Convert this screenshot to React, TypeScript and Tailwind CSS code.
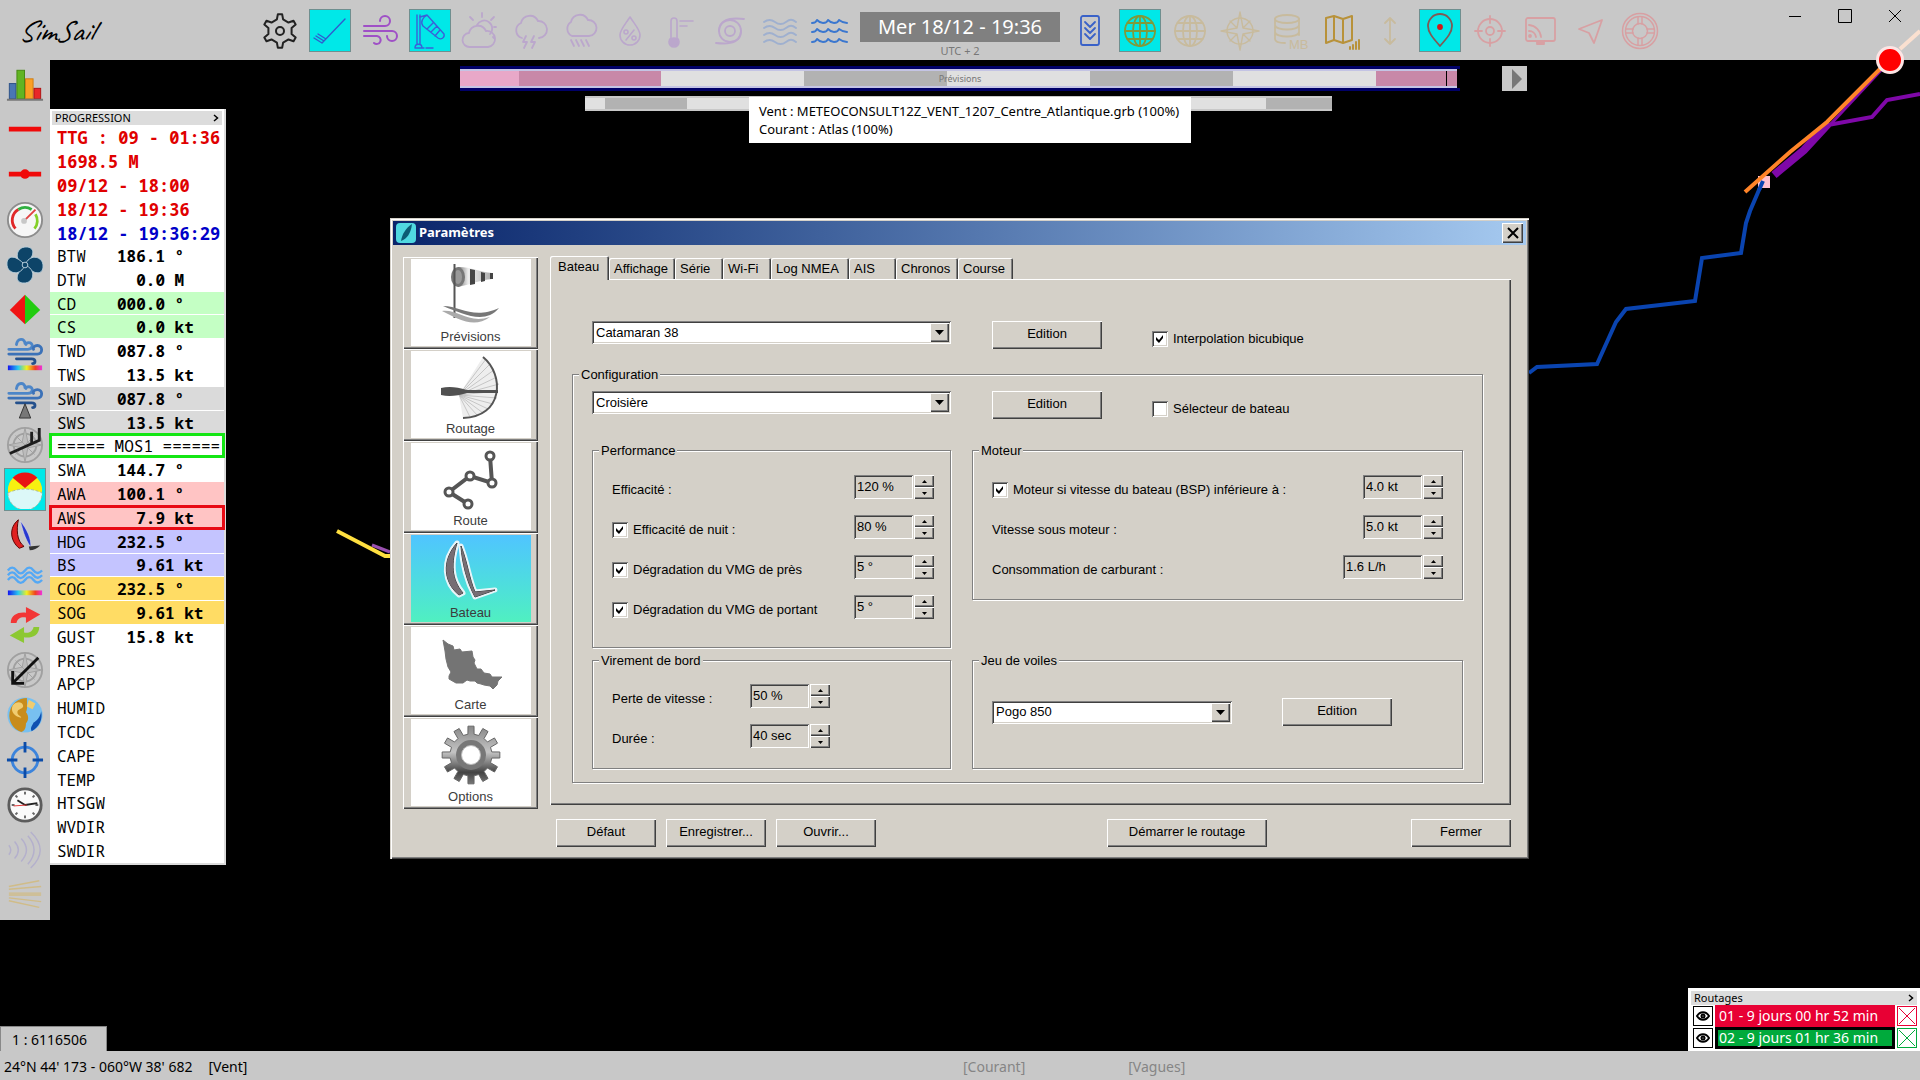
import { useState } from 'react'
import type { ReactNode } from 'react'
import clsx from 'clsx'

const RAISED = 'bg-[#d4d0c8] shadow-[inset_1px_1px_0_#fff,inset_-1px_-1px_0_#404040,inset_-2px_-2px_0_#808080]'
const SUNKEN = 'shadow-[inset_1px_1px_0_#808080,inset_-1px_-1px_0_#fff,inset_2px_2px_0_#404040,inset_-2px_-2px_0_#d4d0c8]'

/** Closed outline of a cog, centred on (c, c). */
function cog(c: number, teeth: number, outer: number, inner: number, half = 0.22, root = 0.36) {
  const pts: string[] = []
  for (let i = 0; i < teeth; i++) {
    const step = (Math.PI * 2) / teeth
    const a = i * step - Math.PI / 2
    const corners: [number, number][] = [
      [-root, inner],
      [-half, outer],
      [half, outer],
      [root, inner],
    ]
    corners.forEach(([k, r]) => {
      const t = a + k * step
      pts.push(`${(c + r * Math.cos(t)).toFixed(2)} ${(c + r * Math.sin(t)).toFixed(2)}`)
    })
  }
  return `M${pts.join('L')}Z`
}

/* ---------- top toolbar ---------- */

type Tool = { label: string; color: string; active?: boolean; width?: number; art: ReactNode }

const PURPLE = '#9f50c6'
const PURPLE_OFF = '#bba7cc'
const GOLD_OFF = '#c8bb9d'
const RED_OFF = '#d8a0a3'

const globe = (
  <>
    <circle cx="20" cy="20" r="15" />
    <ellipse cx="20" cy="20" rx="7" ry="15" />
    <path d="M20 5v30M5 20h30M7.500 12h25M7.500 28h25" />
  </>
)

const leftTools: Tool[] = [
  {
    label: 'Paramètres',
    color: '#222',
    width: 2,
    art: (
      <>
        <path d={cog(20, 6, 17, 12, 0.12, 0.25)} />
        <circle cx="20" cy="20" r="4" />
      </>
    ),
  },
  {
    label: 'Barbules',
    color: '#2f5ccf',
    active: true,
    art: <path d="M35 8 12 32M12 32 4 27M14 30l-8-5M16 28l-8-5" />,
  },
  {
    label: 'Vent',
    color: PURPLE,
    width: 2,
    art: <path d="M4 15h21a5 5 0 1 0-5-5M4 20h28a5 5 0 1 1-5 5M4 25h13a4 4 0 1 1-3 7" />,
  },
  {
    label: 'Manche à air',
    color: '#3a60d8',
    active: true,
    art: (
      <>
        <path d="M7 4v29M10 4v29M5 37c0-5 7-5 7 0zM5 37h9M16 37h7" />
        <path d="M10 6 17 4l17 19c1 4-3 6-6 4L13 15M13 15c-3-4 0-9 4-11M17 18l6-6M21 21l6-6M25 25l5-6" />
      </>
    ),
  },
  {
    label: 'Nuages',
    color: PURPLE_OFF,
    width: 1.8,
    art: (
      <>
        <path d="M10 36a7 7 0 0 1-1-14 9 9 0 0 1 17-2 7 7 0 0 1 2 16z" />
        <path d="M17 14a8 8 0 1 1 13 9M22 2v4M10 6l3 3M34 6l-3 3M36 16h-2M33 26l1 1" />
      </>
    ),
  },
  {
    label: 'Orages',
    color: PURPLE_OFF,
    width: 1.8,
    art: <path d="M12 27a8 8 0 0 1-1-15 9 9 0 0 1 17-2 8 8 0 0 1 1 17M16 25l-3 6h4l-3 6M24 25l-3 6h4l-3 6" />,
  },
  {
    label: 'Pluie',
    color: PURPLE_OFF,
    width: 1.8,
    art: <path d="M12 25a8 8 0 0 1-1-14 9 9 0 0 1 17-2 8 8 0 0 1 1 16zM11 29l3 6M16 29l3 6M21 29l3 6M26 29l3 6" />,
  },
  {
    label: 'Humidité',
    color: PURPLE_OFF,
    width: 1.6,
    art: (
      <>
        <path d="M20 6c6 9 10 13 10 18a10 10 0 0 1-20 0c0-5 4-9 10-18zM24 19l-8 10" />
        <circle cx="16" cy="21" r="2" />
        <circle cx="24" cy="27" r="2" />
      </>
    ),
  },
  {
    label: 'Température',
    color: PURPLE_OFF,
    width: 1.6,
    art: (
      <>
        <path d="M11 27V10a3 3 0 0 1 6 0v17a5 5 0 1 1-6 0zM20 10h13M20 15h7" />
        <circle cx="14" cy="31" r="4" fill="currentColor" />
      </>
    ),
  },
  {
    label: 'Cyclone',
    color: PURPLE_OFF,
    width: 1.8,
    art: (
      <>
        <circle cx="20" cy="20" r="5" />
        <circle cx="20" cy="20" r="11" />
        <path d="M9 20C9 10 17 6 34 8M31 20c0 10-8 14-25 12" />
      </>
    ),
  },
  {
    label: 'Houle',
    color: '#9fb0cf',
    width: 2,
    art: (
      <path d="M4 11c4-3 7-3 11 0s7 3 11 0 6-3 10 0M4 17c4-3 7-3 11 0s7 3 11 0 6-3 10 0M4 24c4-3 7-3 11 0s7 3 11 0 6-3 10 0M4 31c4-3 7-3 11 0s7 3 11 0 6-3 10 0" />
    ),
  },
  {
    label: 'Courant',
    color: '#3b77cf',
    width: 2,
    art: (
      <path d="M2 12q4 0 5-3 3 3 6 3 4 0 5-3 3 3 6 3 4 0 5-3 4 3 8 3M2 21q4 0 5-3 3 3 6 3 4 0 5-3 3 3 6 3 4 0 5-3 4 3 8 3M2 31q4 0 5-3 3 3 6 3 4 0 5-3 3 3 6 3 4 0 5-3 4 3 8 3" />
    ),
  },
]

const rightTools: Tool[] = [
  {
    label: 'Téléchargement',
    color: '#3a62c8',
    width: 1.8,
    art: (
      <>
        <rect x="11" y="5" width="18" height="29" rx="2" />
        <path d="m15 11 5 5 5-5M15 17l5 5 5-5M15 23l5 5 5-5" />
      </>
    ),
  },
  { label: 'Carte du monde', color: '#7f9a3c', active: true, width: 1.8, art: globe },
  { label: 'Globe', color: GOLD_OFF, width: 1.8, art: globe },
  {
    label: 'Rose des vents',
    color: GOLD_OFF,
    art: (
      <>
        <circle cx="20" cy="20" r="13" />
        <path d="M20 1l3 16 16 3-16 3-3 16-3-16-16-3 16-3zM10 10l7 7M30 10l-7 7M10 30l7-7M30 30l-7-7" />
      </>
    ),
  },
  {
    label: 'Mémoire',
    color: GOLD_OFF,
    width: 1.8,
    art: (
      <>
        <ellipse cx="17" cy="8" rx="12" ry="4" />
        <path d="M5 8v20c0 3 5 4 10 4M29 8v16M5 14c0 6 24 6 24 0M5 21c0 6 24 6 24 0" />
        <text x="19" y="38" fontSize="13" fill="currentColor" stroke="none" className="font-['Liberation_Sans',sans-serif]">
          MB
        </text>
      </>
    ),
  },
  {
    label: 'Cartes',
    color: '#b8923a',
    width: 2,
    art: <path d="M6 7l8-2 9 3 9-3v24l-9 3-9-3-8 3zM14 5v24M23 8v24M30 38v-2M33 38v-4M36 38v-7M39 38v-9" />,
  },
  { label: 'Échelle verticale', color: GOLD_OFF, width: 1.8, art: <path d="M20 7v26M15 12l5-5 5 5M15 28l5 5 5-5" /> },
  {
    label: 'Position',
    color: '#7f5a55',
    active: true,
    width: 1.8,
    art: (
      <>
        <path d="M20 35C12 26 8 21 8 15a12 12 0 0 1 24 0c0 6-4 11-12 20z" />
        <circle cx="20" cy="16" r="2" fill="#d01818" stroke="#d01818" />
      </>
    ),
  },
  {
    label: 'Cible',
    color: RED_OFF,
    width: 1.8,
    art: (
      <>
        <circle cx="20" cy="20" r="12" />
        <circle cx="20" cy="20" r="4" />
        <path d="M20 5v7M20 28v7M5 20h7M28 20h7" />
      </>
    ),
  },
  {
    label: 'Diffusion',
    color: RED_OFF,
    width: 1.8,
    art: (
      <>
        <rect x="6" y="7" width="29" height="23" rx="2" />
        <path d="M9 14a13 13 0 0 1 12 12M9 20a7 7 0 0 1 7 6" />
        <path d="M17 30h7v3h-7z" fill="currentColor" />
        <circle cx="10" cy="25" r="1" fill="currentColor" />
      </>
    ),
  },
  { label: 'Navigation', color: RED_OFF, width: 1.8, art: <path d="M32 9 24 32l-5-10-10-4z" /> },
  {
    label: 'Assistance',
    color: RED_OFF,
    width: 1.5,
    art: (
      <>
        <circle cx="20" cy="20" r="17.500" />
        <circle cx="20" cy="20" r="14.500" />
        <circle cx="20" cy="20" r="7.500" />
        <path d="M18 6v7M22 6v7M18 27v7M22 27v7M6 18h7M6 22h7M27 18h7M27 22h7" />
      </>
    ),
  },
]

function ToolButton({ tool }: { tool: Tool }) {
  return (
    <button
      type="button"
      aria-label={tool.label}
      className={clsx('flex h-[43px] w-[42px] items-center justify-center', tool.active && 'border border-[#6f8f8f] bg-[#00e8e8]')}
    >
      <svg
        viewBox="0 0 40 40"
        className="h-10 w-10 shrink-0"
        fill="none"
        stroke="currentColor"
        strokeWidth={tool.width ?? 1.4}
        strokeLinecap="round"
        strokeLinejoin="round"
        color={tool.color}
      >
        {tool.art}
      </svg>
    </button>
  )
}

function Header() {
  return (
    <header className="relative flex h-[60px] shrink-0 justify-center bg-[#c8c8c8]">
      <span className="absolute left-[18px] top-[11px] font-['Caveat','Segoe_Script','Lato',cursive] text-[30px] font-light italic leading-10 text-black">
        SimSail
      </span>
      <div className="flex gap-2 pt-[9px]">
        {leftTools.map((t) => (
          <ToolButton key={t.label} tool={t} />
        ))}
      </div>
      <div className="mx-2 flex w-[202px] flex-col items-center pt-3">
        <div className="flex h-[30px] w-[200px] items-center justify-center bg-[#808080] text-[20px] text-white">
          Mer 18/12 - 19:36
        </div>
        <span className="text-[11px] leading-[18px] text-[#777]">UTC + 2</span>
      </div>
      <div className="flex gap-2 pt-[9px]">
        {rightTools.map((t) => (
          <ToolButton key={t.label} tool={t} />
        ))}
      </div>
      <div className="absolute right-0 top-0 flex">
        <button type="button" aria-label="Réduire" className="h-8 w-[50px] pl-[17px]">
          <svg viewBox="0 0 16 16" className="h-4 w-4" stroke="#000" fill="none"><path d="M2 8.500h12" /></svg>
        </button>
        <button type="button" aria-label="Agrandir" className="h-8 w-[50px] pl-[17px]">
          <svg viewBox="0 0 16 16" className="h-4 w-4" stroke="#000" fill="none"><path d="M1.500 1.500h13v13h-13z" /></svg>
        </button>
        <button type="button" aria-label="Quitter" className="h-8 w-[50px] pl-[17px]">
          <svg viewBox="0 0 16 16" className="h-4 w-4" stroke="#000" fill="none"><path d="M2 2l12 12M14 2 2 14" /></svg>
        </button>
      </div>
    </header>
  )
}

/* ---------- left sidebar ---------- */

const rainbow = <rect x="2" y="31" width="36" height="5" fill="url(#rainbow)" />

const gusts = (
  <g fill="none" strokeWidth="3" strokeLinecap="round">
    <path d="M3 14h20c6 0 6-7 1-7-2 0-3 1-3 2M11 9c1-7 9-7 9-1" stroke="#4d86c8" />
    <path d="M3 19h30c6 0 6-9 0-9-3 0-5 2-4 4" stroke="#3c72b8" />
    <path d="M11 24h16c5 0 4 5 1 5" stroke="#24508c" />
  </g>
)

const compassBack = (
  <g fill="none" stroke="#a0a0a0">
    <circle cx="20" cy="20" r="18" strokeWidth="2" />
    <circle cx="20" cy="20" r="12" strokeWidth="2" />
    <path d="M20 2l3 15 15 3-15 3-3 15-3-15-15-3 15-3z" strokeWidth="1" fill="#bcbcbc" />
    <path d="M10 10l20 20M30 10 10 30" strokeWidth="1" />
  </g>
)

type SideTool = { label: string; active?: boolean; art: ReactNode }

const sideTools: SideTool[] = [
  {
    label: 'Graphiques',
    art: (
      <>
        <rect x="3.500" y="18.500" width="7" height="16" fill="#4a76b4" stroke="#2a4f86" />
        <rect x="11.500" y="4.500" width="8" height="30" fill="#62b422" stroke="#448812" />
        <rect x="20.500" y="13.500" width="8" height="21" fill="#fba024" stroke="#d07c10" />
        <rect x="29.500" y="23.500" width="7" height="11" fill="#e82828" stroke="#b01010" />
        <path d="M1 35.500h38" stroke="#777" strokeWidth="2" />
      </>
    ),
  },
  { label: 'Segment', art: <path d="M3 19h34" stroke="#f00a0a" strokeWidth="5" /> },
  {
    label: 'Point de segment',
    art: (
      <>
        <path d="M3 19h34" stroke="#f00a0a" strokeWidth="5" />
        <circle cx="20" cy="19" r="5" fill="#f00a0a" />
      </>
    ),
  },
  {
    label: 'Vitesse',
    art: (
      <>
        <circle cx="20" cy="20" r="18" fill="#f6f6f6" stroke="#8c8c8c" strokeWidth="2" />
        <g fill="none" strokeWidth="3">
          <path d="M10 29A13 13 0 0 1 13 9" stroke="#e02828" />
          <path d="M13 9a13 13 0 0 1 14 0" stroke="#30b040" />
          <path d="M31 14a13 13 0 0 1-1 15" stroke="#84d028" />
        </g>
        <path d="M19 21 31 9" stroke="#e04040" strokeWidth="2" />
        <circle cx="19" cy="21" r="3" fill="#c8c8c8" />
      </>
    ),
  },
  {
    label: 'Moteur',
    art: (
      <g fill="#0d4468" stroke="#b8d0dc" strokeWidth="1">
        <path d="M18 19C8 14 11 1 21 1c9 0 10 8 1 17z" />
        <path d="M21 18c5-10 18-7 18 3 0 9-8 10-17 1z" />
        <path d="M22 21c10 5 7 18-3 18-9 0-10-8-1-17z" />
        <path d="M19 22C14 32 1 29 1 19c0-9 8-10 17-1z" />
        <circle cx="20" cy="20" r="3" />
      </g>
    ),
  },
  {
    label: 'Babord tribord',
    art: (
      <>
        <path d="M20 4v31L4 20z" fill="#f01414" />
        <path d="M20 4v31l16-15z" fill="#22cc10" />
      </>
    ),
  },
  { label: 'Vent coloré', art: <>{gusts}{rainbow}</> },
  {
    label: 'Vent balise',
    art: (
      <>
        <g transform="translate(0 -1)">{gusts}</g>
        <path d="M20 24l6 15H14z" fill="#777" stroke="#333" />
      </>
    ),
  },
  {
    label: 'Compas vent',
    art: (
      <>
        {compassBack}
        <path d="M4 29 35 15V2M27 18V6" fill="none" stroke="#1c1c1c" strokeWidth="3" />
      </>
    ),
  },
  {
    label: 'Polaire',
    active: true,
    art: (
      <>
        <circle cx="20" cy="20" r="18" fill="#f7f010" />
        <path d="M20 18 7 7a18 18 0 0 1 26 0z" fill="#e81414" />
        <path d="M2 23q18-8 36 0a18 18 0 0 1-36 0z" fill="#dcf8f8" stroke="#a8b8a0" strokeDasharray="3 2" />
      </>
    ),
  },
  {
    label: 'Voiles',
    art: (
      <>
        <path d="M13 4C3 12 4 26 14 34l5-2C11 26 11 14 13 4z" fill="#e02020" stroke="#500" />
        <path d="M15 5c3 10 4 17 11 28 1-9-4-19-11-28z" fill="#2838d0" stroke="#eee" strokeWidth="0.500" />
        <path d="M24 32l12-1c-3 3-7 5-11 5z" fill="#333" />
      </>
    ),
  },
  {
    label: 'Courant coloré',
    art: (
      <>
        <path
          d="M2 10c3-4 6-4 9 0s6 4 9 0 6-4 9 0 6 3 9 0M2 15c3-4 6-4 9 0s6 4 9 0 6-4 9 0 6 3 9 0M2 20c3-4 6-4 9 0s6 4 9 0 6-4 9 0 6 3 9 0"
          fill="none"
          stroke="#54a8f4"
          strokeWidth="2.500"
        />
        {rainbow}
      </>
    ),
  },
  {
    label: 'Inverser',
    art: (
      <>
        <path d="M5 18c0-9 8-12 16-11V1l15 8-15 9v-6c-5-1-9 1-10 6z" fill="#f23636" />
        <path d="M35 22c0 9-8 12-16 11v6L4 31l15-9v6c5 1 9-1 10-6z" fill="#8cc832" />
      </>
    ),
  },
  {
    label: 'Compas courant',
    art: (
      <>
        {compassBack}
        <path d="M34 7 8 33M7 21v13h12" fill="none" stroke="#111" strokeWidth="3" />
      </>
    ),
  },
  {
    label: 'Globe',
    art: (
      <>
        <circle cx="20" cy="20" r="18.500" fill="#78c0f0" />
        <path d="M22 2a18.500 18.500 0 0 0-6 36c4-1 5-5 5-9 4-5 2-10 0-12 2-4 1-8 1-15z" fill="#c88c1c" />
        <path d="M7 10c4-5 10-4 11 0s-6 3-6 7 4 3 4 6c-6-1-12-6-9-13zM24 4l7 4-3 6-6-3z" fill="#f0cc70" />
        <path d="M37 16c2 8-2 17-10 21-2-4 1-6 2-9 3-2 7-5 8-12z" fill="#1050b0" />
      </>
    ),
  },
  {
    label: 'Centrer',
    art: (
      <>
        <circle cx="20" cy="20" r="13.500" fill="none" stroke="#3c84dc" strokeWidth="3" />
        <path d="M20 1v11M20 28v11M1 20h11M28 20h11" stroke="#0c4ca8" strokeWidth="3" />
      </>
    ),
  },
  {
    label: 'Heure',
    art: (
      <>
        <circle cx="20" cy="20" r="17" fill="#fafafa" stroke="#5c5c5c" strokeWidth="3" />
        <path d="M20 6v3M20 31v3M6 20h3M31 20h3M10 10l2 2M30 10l-2 2M10 30l2-2M30 30l-2-2" stroke="#666" strokeWidth="2" />
        <path d="M20 20l-8-5M20 20l13-2" stroke="#222" strokeWidth="2" />
        <path d="M8 21l14-1" stroke="#e03030" />
      </>
    ),
  },
  {
    label: 'Signal',
    art: (
      <path
        d="M3 15q4 5 0 10M9 11q8 9 0 18M16 8q11 12 0 24M23 5q13 15 0 30M26 1q20 19 0 38"
        fill="none"
        stroke="#b4b0cc"
        strokeWidth="1.500"
      />
    ),
  },
  {
    label: 'Isobares',
    art: <path d="M3 11 35 5M3 14l34-3M3 18h34M3 20h34M3 23l34 4M3 26l32 7" fill="none" stroke="#d0bc88" strokeWidth="1.500" />,
  },
]

function Sidebar() {
  return (
    <nav aria-label="Outils" className="flex w-[50px] shrink-0 flex-col items-center self-start bg-[#c8c8c8] pb-[3px] pt-0.5">
      <svg className="absolute h-0 w-0" aria-hidden="true">
        <defs>
          <linearGradient id="rainbow">
            <stop offset="0" stopColor="#1414f0" />
            <stop offset="0.3" stopColor="#28c8f0" />
            <stop offset="0.55" stopColor="#f0f020" />
            <stop offset="0.8" stopColor="#f04020" />
            <stop offset="1" stopColor="#f030e0" />
          </linearGradient>
        </defs>
      </svg>
      {sideTools.map((t) => (
        <div key={t.label} className="flex h-[45px] items-center">
          <button
            type="button"
            aria-label={t.label}
            className={clsx('flex h-[43px] w-[42px] items-center justify-center', t.active && 'border border-[#6f8f8f] bg-[#00e8e8]')}
          >
            <svg viewBox="0 0 40 40" className="h-[38px] w-[38px]">
              {t.art}
            </svg>
          </button>
        </div>
      ))}
    </nav>
  )
}

/* ---------- progression panel ---------- */

type Reading = { name: string; value?: string; tone?: string }

const dates = [
  { text: 'TTG : 09 - 01:36', tone: 'text-[#e00000]' },
  { text: '1698.5 M', tone: 'text-[#e00000]' },
  { text: '09/12 - 18:00', tone: 'text-[#e00000]' },
  { text: '18/12 - 19:36', tone: 'text-[#e00000]' },
  { text: '18/12 - 19:36:29', tone: 'text-[#0000c8]' },
]

const readings: Reading[] = [
  { name: 'BTW', value: '186.1 º' },
  { name: 'DTW', value: '  0.0 M' },
  { name: 'CD', value: '000.0 º', tone: 'bg-[#c4ffc4]' },
  { name: 'CS', value: '  0.0 kt', tone: 'bg-[#c4ffc4]' },
  { name: 'TWD', value: '087.8 º' },
  { name: 'TWS', value: ' 13.5 kt' },
  { name: 'SWD', value: '087.8 º', tone: 'bg-[#dadada]' },
  { name: 'SWS', value: ' 13.5 kt', tone: 'bg-[#dadada]' },
  { name: '===== MOS1 ======', tone: 'outline-[3px] -outline-offset-2 outline-[#14e614]' },
  { name: 'SWA', value: '144.7 º' },
  { name: 'AWA', value: '100.1 º', tone: 'bg-[#ffc4c4]' },
  { name: 'AWS', value: '  7.9 kt', tone: 'bg-[#ffc4c4] outline-[3px] -outline-offset-2 outline-[#e80a14]' },
  { name: 'HDG', value: '232.5 º', tone: 'bg-[#c4c4ff]' },
  { name: 'BS', value: '  9.61 kt', tone: 'bg-[#c4c4ff]' },
  { name: 'COG', value: '232.5 º', tone: 'bg-[#ffdc64]' },
  { name: 'SOG', value: '  9.61 kt', tone: 'bg-[#ffdc64]' },
  { name: 'GUST', value: ' 15.8 kt' },
  ...['PRES', 'APCP', 'HUMID', 'TCDC', 'CAPE', 'TEMP', 'HTSGW', 'WVDIR', 'SWDIR'].map((name) => ({ name })),
]

function PanelTitle({ children }: { children: string }) {
  return (
    <div className="flex h-[14px] items-center justify-between bg-[#dcdcdc] px-[3px] text-[11px] text-black">
      <span>{children}</span>
      <button type="button" aria-label={`Replier ${children}`} className="h-3">
        <svg viewBox="0 0 6 8" className="h-2 w-1.5" fill="none" stroke="#000" strokeWidth="1.500"><path d="M1 1l3.500 3L1 7" /></svg>
      </button>
    </div>
  )
}

function Progression() {
  return (
    <section className="absolute left-[50px] top-[49px] w-[176px] border-b-2 border-r-2 border-[#dcdcdc] bg-white pt-0.5">
      <div className="px-0.5">
        <PanelTitle>PROGRESSION</PanelTitle>
      </div>
      <div className="grid h-[738px] auto-rows-fr whitespace-pre font-['Noto_Sans_Mono','DejaVu_Sans_Mono',monospace] text-[16px] leading-none">
        {dates.map((d) => (
          <div key={d.text} className={clsx('flex items-center pl-[7px] pt-0.5 text-[17px] font-bold', d.tone)}>
            {d.text}
          </div>
        ))}
        {readings.map((r) => (
          <div key={r.name} className="flex pb-px">
            <div className={clsx('flex w-full items-center pl-[7px] pt-px', r.tone)}>
              <span className={r.value ? 'w-[60px]' : ''}>{r.name}</span>
              <span className="font-bold">{r.value}</span>
            </div>
          </div>
        ))}
      </div>
    </section>
  )
}

/* ---------- forecast bars ---------- */

const timeline = [
  { w: 59, c: 'bg-[#e8a8c8]' },
  { w: 142, c: 'bg-[#c888a8]' },
  { w: 143, c: 'bg-[#e0e0e0]' },
  { w: 143, c: 'bg-[#b2b2b2]' },
  { w: 143, c: 'bg-[#e0e0e0]' },
  { w: 143, c: 'bg-[#b2b2b2]' },
  { w: 143, c: 'bg-[#e0e0e0]' },
  { w: 70, c: 'bg-[#c888a8]' },
  { w: 1, c: 'bg-black' },
  { w: 10, c: 'bg-[#c888a8]' },
]

const currents = [
  { w: 20, c: 'bg-[#e0e0e0]' },
  { w: 82, c: 'bg-[#b2b2b2]' },
  { w: 143, c: 'bg-[#e0e0e0]' },
  { w: 143, c: 'bg-[#b2b2b2]' },
  { w: 150, c: 'bg-[#b2b2b2]' },
  { w: 143, c: 'bg-[#e0e0e0]' },
  { w: 66, c: 'bg-[#b2b2b2]' },
]

function Timeline() {
  return (
    <div className="absolute inset-x-0 top-1.5 flex flex-col items-center gap-[5px]">
      <div className="relative w-[1000px] border-y-[3px] border-[#000068] bg-black pr-[3px]">
        <div className="flex h-[19px] border-y-2 border-[#c4c4e4]">
          {timeline.map((s, i) => (
            <div key={i} className={s.c} style={{ flexGrow: s.w }} />
          ))}
        </div>
        <span className="absolute inset-0 flex items-center justify-center text-[9px] text-[#777]">Prévisions</span>
        <button
          type="button"
          aria-label="Lecture"
          className="absolute -right-[67px] -top-[3px] flex h-[25px] w-[25px] items-center justify-center bg-[#c8c8c8]"
        >
          <svg viewBox="0 0 10 20" className="ml-1 h-5 w-2.5" fill="#777"><path d="M0 0l10 10L0 20z" /></svg>
        </button>
      </div>
      <div className="mr-[3px] w-[747px] bg-[#c8c8c8] py-0.5">
        <div className="flex h-[11px]">
          {currents.map((s, i) => (
            <div key={i} className={s.c} style={{ flexGrow: s.w }} />
          ))}
        </div>
      </div>
      <div role="tooltip" className="absolute left-1/2 top-[31px] w-[442px] -translate-x-[211px] bg-white px-2.5 py-[5px] text-[13px] leading-[18px] text-black">
        <p className="whitespace-nowrap">Vent : METEOCONSULT12Z_VENT_1207_Centre_Atlantique.grb (100%)</p>
        <p>Courant : Atlas (100%)</p>
      </div>
    </div>
  )
}

/** Computed routes, drawn over the chart and the toolbar. */
function Routes() {
  return (
    <svg viewBox="0 0 1920 1080" className="pointer-events-none absolute inset-0 h-full w-full" fill="none" strokeWidth="4">
      <path d="M1529 373l8-6 60-3 19-42 10-13 69-8 7-43 39-5 5-30 4-12 12-28" stroke="#0a44b0" />
      <path d="M1828 125l44-8 15-17 33-6" stroke="#7f08a8" />
      <path d="M1774 175l30-25 24-26" stroke="#7f08a8" strokeWidth="8" />
      <path d="M1828 127l56-60" stroke="#7f08a8" strokeWidth="3" />
      <rect x="1758" y="176" width="12" height="12" fill="#ffc0d0" />
      <path d="M1759 190l4-9" stroke="#0a44b0" />
      <path d="M1745 192l45-40 37-30 57-57" stroke="#ff8428" />
      <path d="M1900 49l20-18" stroke="#fae0d0" />
      <circle cx="1890" cy="60" r="12.500" fill="#f00" stroke="#fce4e4" strokeWidth="3" />
      <path d="M372 545l18 7" stroke="#9a50b0" strokeWidth="3" />
      <path d="M337 531l48 25h6" stroke="#ffe040" />
    </svg>
  )
}

/* ---------- dialog controls ---------- */

function PushButton({ children, className }: { children: string; className?: string }) {
  return (
    <button type="button" className={clsx('h-7 shrink-0 pb-0.5', RAISED, className)}>
      {children}
    </button>
  )
}

function Combo({ label, value, className }: { label: string; value: string; className?: string }) {
  return (
    <div className={clsx('relative h-[23px] bg-white', SUNKEN, className)}>
      <select aria-label={label} defaultValue={value} className="h-full w-full appearance-none bg-transparent pl-1 pr-6 outline-none">
        <option>{value}</option>
      </select>
      <span className={clsx('pointer-events-none absolute bottom-0.5 right-0.5 top-0.5 flex w-[19px] items-center justify-center', RAISED)}>
        <svg viewBox="0 0 9 5" className="h-[5px] w-[9px]"><path d="M0 0h9L4.500 5z" /></svg>
      </span>
    </div>
  )
}

function Check({ children, checked = false }: { children: string; checked?: boolean }) {
  return (
    <label className="flex items-center gap-[5px]">
      <span className="relative h-4 w-4">
        <input type="checkbox" defaultChecked={checked} className={clsx('peer block h-4 w-4 appearance-none bg-white', SUNKEN)} />
        <svg viewBox="0 0 16 16" className="pointer-events-none absolute inset-0 hidden h-4 w-4 peer-checked:block">
          <path d="M4 6l3 3 4-5v3l-4 5-3-3z" />
        </svg>
      </span>
      {children}
    </label>
  )
}

function Spinner({ label, value, wide }: { label: string; value: string; wide?: boolean }) {
  return (
    <span className={clsx('flex h-6 gap-px', wide ? 'w-[100px]' : 'w-20')}>
      <input type="text" aria-label={label} defaultValue={value} className={clsx('h-full min-w-0 flex-1 bg-transparent pb-0.5 pl-[3px] outline-none', SUNKEN)} />
      <span className="flex w-5 flex-col">
        <button type="button" aria-label={`${label} plus`} className={clsx('flex h-3 items-center justify-center', RAISED)}>
          <svg viewBox="0 0 5 3" className="h-[3px] w-[5px]"><path d="M0 3h5L2.500 0z" /></svg>
        </button>
        <button type="button" aria-label={`${label} moins`} className={clsx('flex h-3 items-center justify-center', RAISED)}>
          <svg viewBox="0 0 5 3" className="h-[3px] w-[5px]"><path d="M0 0h5L2.500 3z" /></svg>
        </button>
      </span>
    </span>
  )
}

function Group({ title, children, className }: { title: string; children: ReactNode; className?: string }) {
  return (
    <fieldset className={clsx('min-w-0 border border-[#808080] shadow-[inset_1px_1px_0_#fff,1px_1px_0_#fff]', className)}>
      <legend className="ml-1.5 h-4 bg-[#d4d0c8] px-0.5 leading-[18px]">{title}</legend>
      {children}
    </fieldset>
  )
}

type Setting = { label: string; value: string; check?: boolean; wide?: boolean }

function SettingRow({ label, value, check, wide }: Setting) {
  return (
    <div className="flex h-10 items-start justify-between">
      <div className="flex h-[29px] items-center">{check ? <Check checked>{label}</Check> : <span>{label}</span>}</div>
      <Spinner label={label} value={value} wide={wide} />
    </div>
  )
}

const performance: Setting[] = [
  { label: 'Efficacité :', value: '120 %' },
  { label: 'Efficacité de nuit :', value: '80 %', check: true },
  { label: 'Dégradation du VMG de près', value: '5 °', check: true },
  { label: 'Dégradation du VMG de portant', value: '5 °', check: true },
]

const engine: Setting[] = [
  { label: 'Moteur si vitesse du bateau (BSP) inférieure à :', value: '4.0 kt', check: true },
  { label: 'Vitesse sous moteur :', value: '5.0 kt' },
  { label: 'Consommation de carburant :', value: '1.6 L/h', wide: true },
]

const tacking: Setting[] = [
  { label: 'Perte de vitesse :', value: '50 %' },
  { label: 'Durée :', value: '40 sec' },
]

const sections = [
  {
    name: 'Prévisions',
    art: (
      <>
        <defs>
          <linearGradient id="sock">
            <stop offset="0" stopColor="#777" />
            <stop offset="0.3" stopColor="#eee" />
            <stop offset="1" stopColor="#aaa" />
          </linearGradient>
        </defs>
        <path d="M19 4c14 0 22 5 34 6v6c-12 1-20 5-34 8z" fill="url(#sock)" />
        <path d="M31 6l5 1v14l-5 1zM42 9l4 1v8l-4 1zM51 10h3v6h-3z" fill="#444" />
        <ellipse cx="19" cy="14" rx="7" ry="10" fill="#777" />
        <ellipse cx="19" cy="14" rx="4" ry="7" fill="#999" />
        <path d="M15.500 1v54" stroke="#555" strokeWidth="2" />
        <path d="M4 43c18 0 30 14 56 2-14 17-36 6-56-2z" fill="#777" />
        <path d="M3 48c16-2 26 13 48 6-16 12-32 2-48-6z" fill="#aaa" />
      </>
    ),
  },
  {
    name: 'Routage',
    art: (
      <>
        <path d="M44 2C66 20 66 58 24 63L20 40z" fill="#eee" />
        <path
          d="M20 40 47 4M20 40 51 9M20 40 55 15M20 40 58 22M20 40 60 29M20 40 59 36M20 40 58 43M20 40 54 49M20 40 49 54M20 40 44 58M20 40 38 60M20 40 31 62"
          stroke="#bbb"
          strokeWidth="0.800"
        />
        <path d="M44 2c22 18 20 60-20 61" fill="none" stroke="#555" strokeWidth="2" />
        <path d="M2 33c8-2 16-1 26 2h31v3H28c-10 3-18 4-26 2z" fill="#505050" />
      </>
    ),
  },
  {
    name: 'Route',
    art: (
      <g fill="#fff" stroke="#555" strokeWidth="3">
        <path d="M29 57 10 45 31 29l22 7-2-27" fill="none" strokeWidth="4" />
        <circle cx="29" cy="57" r="4" />
        <circle cx="10" cy="45" r="4" />
        <circle cx="31" cy="29" r="4" />
        <circle cx="53" cy="36" r="4" />
        <circle cx="51" cy="9" r="4" />
      </g>
    ),
  },
  {
    name: 'Bateau',
    art: (
      <g fill="#766e74" stroke="#e8f4f8" strokeWidth="5" strokeLinejoin="round" paintOrder="stroke">
        <path d="M18 4C2 22 5 44 20 56l4-2C12 40 12 24 18 4z" />
        <path d="M22 7c7 18 8 32 14 46l20-2-20 7c-8-15-13-34-14-51z" />
        <path d="M18 4C2 22 5 44 20 56l4-2C12 40 12 24 18 4zM22 7c7 18 8 32 14 46l20-2-20 7c-8-15-13-34-14-51z" stroke="#333" strokeWidth="1" />
      </g>
    ),
  },
  {
    name: 'Carte',
    art: (
      <path
        d="M4 9l5 4 5 2 1 4 6-1 2 3 10-1 1 6 2 3-1 3 3 6 4 0 3 4 6 1 2 3 10 0-4 4-1 4-4 4-3-3-6-1-3-1-4-1-2-2-5 0-3-1-4 3-7 0-7-4 0-3 2-4-3-5-2-8-1-8z"
        fill="#747474"
        stroke="#747474"
        strokeWidth="1"
      />
    ),
  },
  {
    name: 'Options',
    art: (
      <>
        <defs>
          <linearGradient id="steel" x1="0" y1="0" x2="0" y2="1">
            <stop offset="0" stopColor="#888" />
            <stop offset="0.45" stopColor="#c4c4c4" />
            <stop offset="0.8" stopColor="#444" />
            <stop offset="1" stopColor="#777" />
          </linearGradient>
        </defs>
        <path d={cog(32, 12, 29, 21, 0.2, 0.28)} fill="url(#steel)" stroke="#666" />
        <circle cx="32" cy="32" r="12" fill="#fff" stroke="#777" strokeWidth="6" />
        <circle cx="32" cy="32" r="9.500" fill="#fff" stroke="#bbb" />
      </>
    ),
  },
]

const tabs = [
  { name: 'Bateau', w: 'w-[59px]' },
  { name: 'Affichage', w: 'w-[66px]' },
  { name: 'Série', w: 'w-[48px]' },
  { name: 'Wi-Fi', w: 'w-[48px]' },
  { name: 'Log NMEA', w: 'w-[78px]' },
  { name: 'AIS', w: 'w-[47px]' },
  { name: 'Chronos', w: 'w-[62px]' },
  { name: 'Course', w: 'w-[55px]' },
]

function BoatPane() {
  return (
    <div role="tabpanel" className="pb-[22px] pl-[22px] pr-7 pt-[42px] shadow-[inset_1px_1px_0_#fff,inset_-1px_-1px_0_#404040,inset_-2px_-2px_0_#808080]">
      <div className="flex items-start px-5">
        <Combo label="Bateau" value="Catamaran 38" className="w-[359px]" />
        <PushButton className="ml-[41px] w-[110px]">Edition</PushButton>
        <div className="ml-[50px] flex h-7 items-center pt-2">
          <Check checked>Interpolation bicubique</Check>
        </div>
      </div>
      <Group title="Configuration" className="mt-[17px]">
        <div className="px-[19px] pb-[13px] pt-[9px]">
          <div className="flex items-start">
            <Combo label="Configuration" value="Croisière" className="w-[359px]" />
            <PushButton className="ml-[41px] w-[110px]">Edition</PushButton>
            <div className="ml-[50px] flex h-7 items-center pt-2">
              <Check>Sélecteur de bateau</Check>
            </div>
          </div>
          <div className="mt-[23px] grid grid-cols-[359px_1fr] items-start gap-x-[21px] gap-y-1">
            <Group title="Performance">
              <div className="pb-3 pl-[19px] pr-4 pt-[17px]">
                {performance.map((s) => (
                  <SettingRow key={s.label} {...s} />
                ))}
              </div>
            </Group>
            <Group title="Moteur">
              <div className="px-[19px] pb-1 pt-[17px]">
                {engine.map((s) => (
                  <SettingRow key={s.label} {...s} />
                ))}
              </div>
            </Group>
            <Group title="Virement de bord" className="self-stretch">
              <div className="w-[237px] pb-1 pl-[19px] pt-4">
                {tacking.map((s) => (
                  <SettingRow key={s.label} {...s} />
                ))}
              </div>
            </Group>
            <Group title="Jeu de voiles" className="self-stretch">
              <div className="flex items-center gap-[50px] pl-[19px] pt-[30px]">
                <Combo label="Jeu de voiles" value="Pogo 850" className="w-60" />
                <PushButton className="w-[110px]">Edition</PushButton>
              </div>
            </Group>
          </div>
        </div>
      </Group>
    </div>
  )
}

function SettingsDialog() {
  const [section, setSection] = useState('Bateau')
  const [tab, setTab] = useState('Bateau')

  return (
    <div
      role="dialog"
      aria-labelledby="dialog-title"
      className="absolute left-[390px] top-[158px] w-[1139px] bg-[#d4d0c8] p-[3px] font-['Liberation_Sans',Arial,sans-serif] text-[13px] text-black shadow-[inset_1px_1px_0_#d4d0c8,inset_2px_2px_0_#fff,inset_-1px_-1px_0_#404040,inset_-2px_-2px_0_#808080]"
    >
      <div className="flex h-6 items-center bg-linear-to-r from-[#0a246a] to-[#a6caf0] pl-[3px] pr-[3px]">
        <svg viewBox="0 0 20 20" className="h-5 w-5">
          <rect width="20" height="20" rx="4" fill="#50d8e0" />
          <path d="M16 1C10 5 6 11 5 18c6-2 10-8 11-17z" fill="#0c5c74" />
        </svg>
        <h1 id="dialog-title" className="flex-1 pl-[3px] font-['Noto_Sans',sans-serif] text-[13px] font-bold text-white">
          Paramètres
        </h1>
        <button type="button" aria-label="Fermer la fenêtre" className={clsx('flex h-5 w-[21px] items-center justify-center', RAISED)}>
          <svg viewBox="0 0 12 12" className="h-3 w-3" stroke="#000" strokeWidth="2"><path d="M1 1l10 10M11 1 1 11" /></svg>
        </button>
      </div>

      <div className="flex gap-3 pb-[9px] pl-2.5 pr-[15px] pt-2.5">
        <div className="flex w-[135px] shrink-0 flex-col pt-0.5">
          {sections.map((s) => (
            <button
              key={s.name}
              type="button"
              onClick={() => setSection(s.name)}
              className={clsx('flex h-[92px] flex-col items-center pt-0.5', RAISED)}
            >
              <span
                className={clsx(
                  'flex h-[87px] w-[120px] flex-col items-center pt-1 text-[#3c3c3c]',
                  section === s.name ? 'bg-linear-to-b from-[#50c4ff] to-[#50f0c0]' : 'bg-white',
                )}
              >
                <svg viewBox="0 0 64 64" className="h-16 w-16 shrink-0">
                  {s.art}
                </svg>
                <span className="pt-px leading-[18px]">{s.name}</span>
              </span>
            </button>
          ))}
        </div>

        <div className="min-w-0 flex-1">
          <div role="tablist" className="flex h-6 items-end">
            {tabs.map((t) => (
              <button
                key={t.name}
                type="button"
                role="tab"
                aria-selected={tab === t.name}
                onClick={() => setTab(t.name)}
                className={clsx(
                  'shrink-0 rounded-t-[2px] text-left shadow-[inset_1px_1px_0_#fff,inset_-1px_0_0_#404040,inset_-2px_0_0_#808080]',
                  tab === t.name ? 'relative -mb-px h-6 bg-[#d4d0c8] pb-0.5 pl-2' : 'h-[21px] pl-[5px]',
                  t.w,
                )}
              >
                {t.name}
              </button>
            ))}
          </div>
          <BoatPane />
          <div className="mt-3.5 flex gap-2.5 pl-1.5">
            <PushButton className="w-[100px]">Défaut</PushButton>
            <PushButton className="w-[100px]">Enregistrer...</PushButton>
            <PushButton className="w-[100px]">Ouvrir...</PushButton>
            <div className="flex flex-1 justify-end gap-36">
              <PushButton className="w-40">Démarrer le routage</PushButton>
              <PushButton className="w-[100px]">Fermer</PushButton>
            </div>
          </div>
        </div>
      </div>
    </div>
  )
}

/* ---------- routings list + status bar ---------- */

const routings = [
  { text: '01 - 9 jours 00 hr 52 min', band: 'bg-[#e80034]', ink: 'text-[#e80034]' },
  { text: '02 - 9 jours 01 hr 36 min', band: 'bg-[#00aa3c] border-[3px] border-black', ink: 'text-[#00aa3c]' },
]

function Routings() {
  return (
    <section className="absolute bottom-0 right-0 w-[232px] bg-white px-[3px] pb-0.5 pt-[3px]">
      <PanelTitle>Routages</PanelTitle>
      {routings.map((r, i) => (
        <div key={r.text} className={clsx('flex h-[22px] items-center gap-0.5 pl-0.5', r.ink)}>
          <button type="button" aria-label={`Afficher ${i + 1}`} className="flex h-5 w-5 items-center justify-center border border-black">
            <svg viewBox="0 0 14 12" className="h-3 w-3.5" fill="none" stroke="#000" strokeWidth="2">
              <path d="M1 6c3-5 9-5 12 0-3 5-9 5-12 0z" />
              <circle cx="7" cy="6" r="1.500" />
            </svg>
          </button>
          <div className={clsx('flex h-full flex-1 items-center whitespace-nowrap text-[14px] leading-none text-white', r.band, i === 0 ? 'pl-1' : 'pl-px')}>
            {r.text}
          </div>
          <button type="button" aria-label={`Supprimer ${i + 1}`} className="h-5 w-5 border border-current">
            <svg viewBox="0 0 18 18" className="h-full w-full" stroke="currentColor"><path d="M1 1l16 16M17 1 1 17" /></svg>
          </button>
        </div>
      ))}
    </section>
  )
}

function StatusBar() {
  return (
    <footer className="relative flex h-[29px] shrink-0 items-center bg-[#c8c8c8] pl-1 pt-0.5 text-[14px] text-black">
      <span>24°N 44' 173 - 060°W 38' 682</span>
      <span className="ml-4">[Vent]</span>
      <div className="absolute left-1/2 flex gap-[103px] text-[#858585]">
        <span className="ml-[3px]">[Courant]</span>
        <span>[Vagues]</span>
      </div>
    </footer>
  )
}

export default function App() {
  return (
    <div className="relative flex min-h-screen flex-col overflow-hidden bg-black font-['Noto_Sans','Open_Sans',sans-serif]">
      <Header />
      <Routes />
      <main className="relative flex flex-1">
        <Sidebar />
        <Progression />
        <Timeline />
        <SettingsDialog />
        <Routings />
        <div className="absolute bottom-0 left-0 flex h-[25px] w-[107px] items-center border border-b-0 border-[#888] bg-[#c8c8c8] pl-[11px] text-[14px]">
          1 : 6116506
        </div>
      </main>
      <StatusBar />
    </div>
  )
}
